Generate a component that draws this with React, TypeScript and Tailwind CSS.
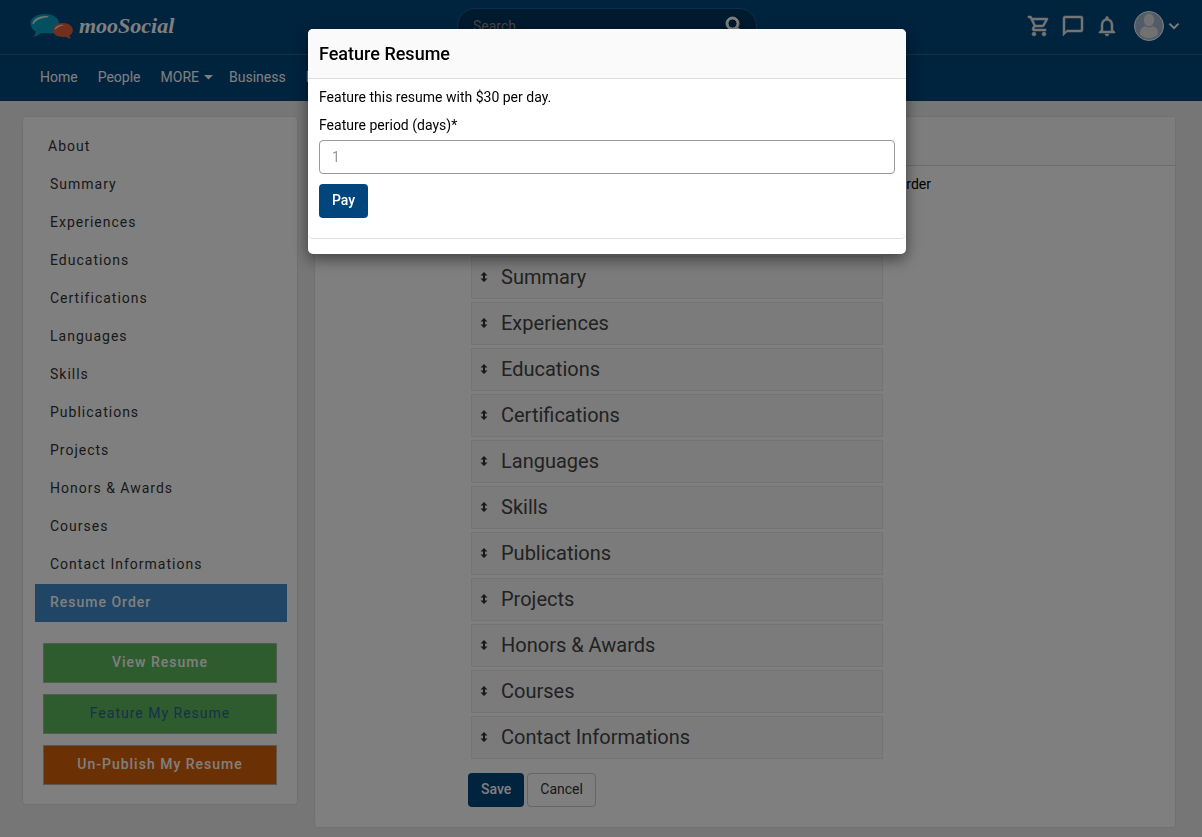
import React from "react";
import {
  MdOutlineShoppingCart,
  MdChatBubbleOutline,
  MdNotificationsNone,
  MdExpandMore,
  MdSearch,
} from "react-icons/md";

const sections = [
  "Summary",
  "Experiences",
  "Educations",
  "Certifications",
  "Languages",
  "Skills",
  "Publications",
  "Projects",
  "Honors & Awards",
  "Courses",
  "Contact Informations",
];

function Logo() {
  return (
    <a href="#" className="flex items-center gap-1.5">
      <svg width="43" height="26" viewBox="0 0 43 26" aria-hidden="true">
        <path
          d="M15 1C6.500 1 .5 5 .5 10.500c0 3.500 2 6.300 5.200 8-.3 2-1 3.700-2.400 5 3-.2 5.500-1.600 7.500-3.500 1.300.2 2.700.3 4.200.3h8C27.500 18.500 29 14 29 10.500 29 5 23.500 1 15 1z"
          fill="#08a0c0"
        />
        <path d="M2.500 10.500C4 5.500 9.500 2.600 18 3.200c.6.100.5.900 0 1C11.500 4.800 6.500 6.500 3.800 10.800c-.4.600-1.500.5-1.300-.3z" fill="#d6eef4" />
        <path
          d="M33 10c-6 0-10 3.100-10 7.300S27 24 33 24c1 0 2-.1 2.900-.2 1.300 1.100 3 1.900 5 2-.8-.9-1.200-2-1.300-3.200 2-1.200 3.300-3.100 3.300-5.300C42.900 13.100 39 10 33 10z"
          fill="#e0603a"
        />
        <path d="M24.600 16.200c1-2.800 4.300-4.600 8.400-4.400.4.100.4.500 0 .6-3.500.7-5.800 1.800-7.500 4.200z" fill="#fbe3da" />
      </svg>
      <span className="font-['Liberation_Serif',serif] text-[22px] leading-6 font-bold text-white italic">
        mooSocial
      </span>
    </a>
  );
}

function DragIcon() {
  return (
    <svg width="8" height="10" viewBox="0 0 8 10" fill="#333" aria-hidden="true">
      <path d="M4 0l3.500 3.500H5v3h2.500L4 10 .5 6.500H3v-3H.5z" />
    </svg>
  );
}

function Avatar() {
  return (
    <svg width="30" height="30" viewBox="0 0 30 30" aria-hidden="true">
      <circle cx="15" cy="15" r="14.500" fill="#a3b8d0" stroke="#fff" />
      <ellipse cx="15" cy="9" rx="5.200" ry="6.200" fill="#e3e3e3" />
      <path d="M6 23c0-5 2-7.200 5.500-7.700 2 1.600 5 1.600 7 0 3.500.5 5.500 2.700 5.500 7.700-2 3-5.500 4.300-9 4.300S8 26 6 23z" fill="#e3e3e3" />
    </svg>
  );
}

function Header() {
  return (
    <header className="bg-[#00467d] text-white">
      <div className="grid h-[55px] grid-cols-[1fr_300px_1fr] items-center border-b border-[#33638c] pr-[18px] pb-0.5 pl-[30px] [&_path[fill=none]]:hidden">
        <Logo />
        <label className="flex h-9 items-center justify-between rounded-full border border-[#1c5f97] bg-[#00345d] pr-[9px] pl-[15px]">
          <input
            type="search"
            aria-label="Search"
            placeholder="Search"
            className="w-40 bg-transparent text-sm outline-none placeholder:text-[#8c8c8c]"
          />
          <MdSearch size={24} className="stroke-current stroke-1" />
        </label>
        <div className="flex items-center justify-end">
          <div className="mr-[15px] flex gap-2.5 text-[#e8e8e8]">
            <button aria-label="Cart"><MdOutlineShoppingCart size={24} className="stroke-current stroke-[0.5]" /></button>
            <button aria-label="Messages"><MdChatBubbleOutline size={24} className="stroke-current stroke-[0.5]" /></button>
            <button aria-label="Notifications"><MdNotificationsNone size={24} className="stroke-current stroke-[0.5]" /></button>
          </div>
          <button aria-label="Account" className="flex items-center">
            <Avatar />
            <MdExpandMore size={20} className="stroke-current stroke-[0.5]" />
          </button>
        </div>
      </div>
      <nav className="flex h-[46px] items-center gap-5 pb-0.5 pl-10 text-sm">
        <a href="#">Home</a>
        <a href="#">People</a>
        <a href="#" className="-mr-1 flex items-center gap-[5px]">
          MORE
          <svg width="9" height="5" viewBox="0 0 9 5" fill="currentColor" aria-hidden="true">
            <path d="M0 0h9L4.500 4.500z" />
          </svg>
        </a>
        <a href="#">Business</a>
        <a href="#">Blogs</a>
      </nav>
    </header>
  );
}

function Sidebar() {
  return (
    <aside className="w-[274px] shrink-0 self-start rounded-[3px] bg-white pt-[11px] pr-[10px] pb-[19px] pl-3 text-sm tracking-[1px] shadow-[0_0_2px_rgba(0,0,0,0.15)]">
      <ul className="text-[#333]">
        <li>
          <a href="#" className="block h-[38px] px-[13px] leading-9">About</a>
        </li>
        {sections.map((name) => (
          <li key={name}>
            <a href="#" className="block h-[38px] px-[15px] leading-9">{name}</a>
          </li>
        ))}
        <li>
          <a href="#" className="block h-[38px] bg-[#428bca] px-[15px] leading-9 font-medium text-white">
            Resume Order
          </a>
        </li>
      </ul>
      <div className="mt-[21px] mr-[10px] ml-2 flex flex-col gap-[11px] text-center">
        <button className="h-10 border border-[#a8b4a8] bg-[#5cb85c] pb-0.5 font-medium tracking-[1px] text-white">View Resume</button>
        <button className="h-10 border border-[#a8b4a8] bg-[#5cb85c] pb-0.5 tracking-[1px] text-[#2a6496]">Feature My Resume</button>
        <button className="h-10 border border-[#c0a898] bg-[#d9600a] pb-0.5 font-medium tracking-[1px] text-white">Un-Publish My Resume</button>
      </div>
    </aside>
  );
}

function OrderPanel() {
  return (
    <main className="min-w-0 flex-1 rounded-[3px] bg-white shadow-[0_0_2px_rgba(0,0,0,0.15)]">
      <div className="h-[49px] border-b border-[#d8d8d8] bg-[#fbfbfb]" />
      <p className="w-[616px] pt-2 text-right text-sm text-black">order</p>
      <ul className="mt-[62px] ml-[156px] flex w-[412px] flex-col gap-[3px]">
        {sections.map((name) => (
          <li
            key={name}
            className="flex h-[43px] items-center gap-[13px] border border-[#e8e8e8] bg-[#f6f6f6] pb-0.5 pl-2 text-xl text-[#444]"
          >
            <DragIcon />
            {name}
          </li>
        ))}
      </ul>
      <div className="mt-[14px] ml-[153px] flex gap-[3px] pb-5 text-sm">
        <button className="h-[34px] rounded bg-[#00467d] px-[13px] pb-0.5 font-medium text-white">Save</button>
        <button className="h-[34px] rounded border border-[#ccc] bg-white px-3 pb-0.5 text-[#333]">Cancel</button>
      </div>
    </main>
  );
}

function FeatureDialog() {
  return (
    <div className="fixed inset-0 flex items-start justify-center bg-black/50 pt-[29px] pl-3">
      <div
        role="dialog"
        aria-modal="true"
        aria-labelledby="feature-title"
        className="w-[598px] rounded-[5px] bg-white pb-[15px] text-sm text-black shadow-[0_5px_15px_rgba(0,0,0,0.5)]"
      >
        <h2 id="feature-title" className="rounded-t-[5px] border-b border-[#ddd] bg-[#fafafa] px-[11px] text-lg leading-[49px] font-medium">
          Feature Resume
        </h2>
        <form
          className="rounded-b-[5px] border-b border-[#e0e0e0] px-[11px] pt-2 pb-5"
          onSubmit={(e: React.FormEvent) => e.preventDefault()}
        >
          <p>Feature this resume with $30 per day.</p>
          <label htmlFor="period" className="mt-2 mb-[5px] block">
            Feature period (days)*
          </label>
          <input
            id="period"
            type="text"
            placeholder="1"
            className="block h-[34px] w-full rounded border border-[#999] px-3 outline-none placeholder:text-[#999]"
          />
          <button className="mt-[10px] block h-[34px] rounded bg-[#00467d] px-[13px] pb-0.5 font-medium text-white">Pay</button>
        </form>
      </div>
    </div>
  );
}

export default function App() {
  return (
    <div className="min-h-screen bg-[#ededed] font-[Roboto,sans-serif]">
      <Header />
      <div className="flex gap-[18px] pt-4 pr-[27px] pb-[10px] pl-[23px]">
        <Sidebar />
        <OrderPanel />
      </div>
      <FeatureDialog />
    </div>
  );
}
